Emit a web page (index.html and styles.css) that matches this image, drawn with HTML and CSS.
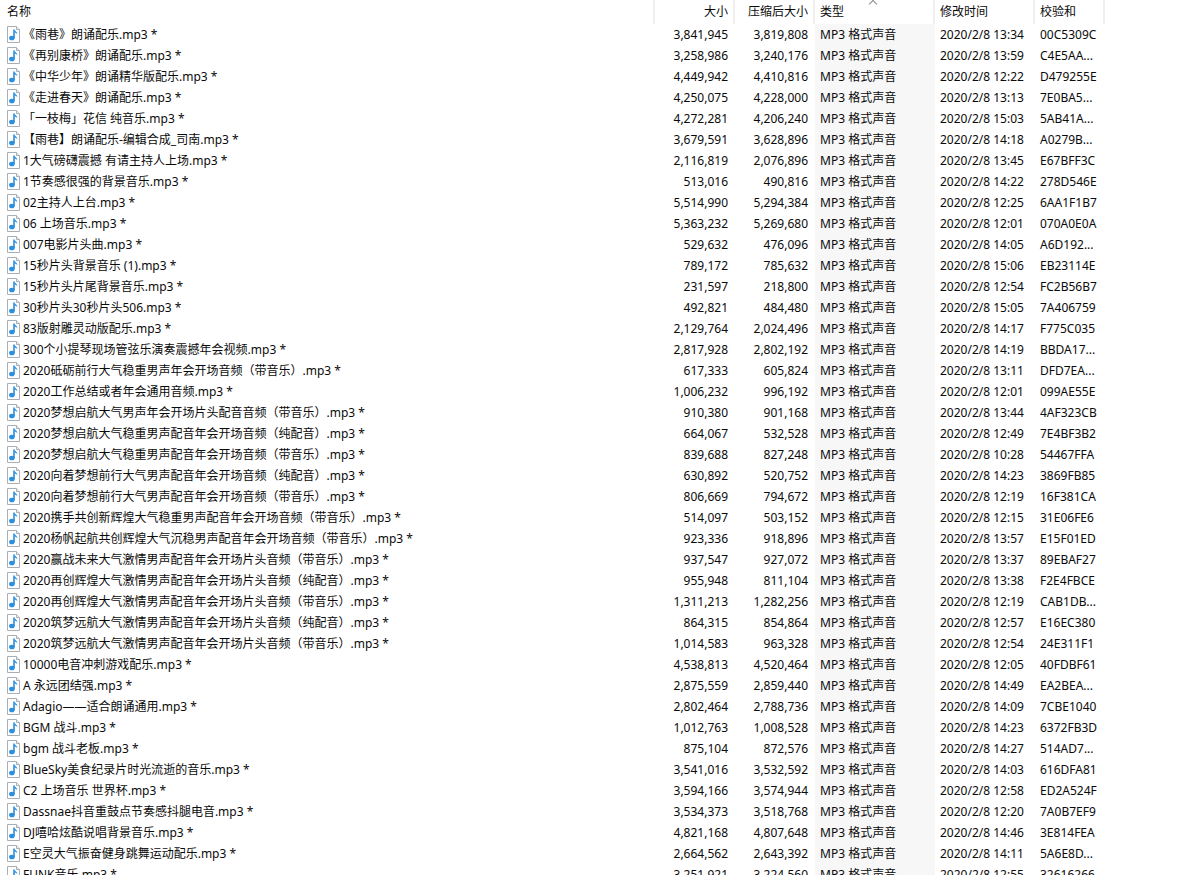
FILE: index.html
```html
<!DOCTYPE html>
<html lang="zh-CN">

<head>
  <meta charset="UTF-8">
  <title>压缩文件列表</title>
  <link rel="stylesheet" href="styles.css">
</head>

<body>
  <svg class="defs" width="0" height="0">
    <symbol id="mp3" viewBox="0 0 14 17">
      <path d="M.5 .5H9.5L12.5 3.5V16.5H.5Z" fill="#fff" stroke="#a8afb6"/>
      <path d="M9.5 .5V3.5H12.5" fill="#eef1f4" stroke="#a8afb6"/>
      <path d="M7 3.5V12" stroke="#2b8fdc" stroke-width="1.6"/>
      <path d="M7.5 3.5C8 5.5 10.8 5.5 10.2 8.5C9.6 7 8.8 6.8 7.5 6.5Z" fill="#2b8fdc"/>
      <ellipse cx="4.9" cy="12" rx="2.8" ry="2.3" fill="#2b8fdc"/>
    </symbol>
  </svg>

  <table class="files">
    <colgroup>
      <col class="c-name">
      <col class="c-size">
      <col class="c-packed">
      <col class="c-type">
      <col class="c-time">
      <col class="c-crc">
      <col>
    </colgroup>
    <thead>
      <tr>
        <th>名称</th>
        <th class="num">大小</th>
        <th class="num">压缩后大小</th>
        <th class="sorted">类型<span class="caret"></span></th>
        <th>修改时间</th>
        <th>校验和</th>
        <th class="rest"></th>
      </tr>
    </thead>
    <tbody>
      <tr><td><svg class="ico"><use href="#mp3"/></svg>《雨巷》朗诵配乐.mp3 *</td><td class="num">3,841,945</td><td class="num">3,819,808</td><td class="type">MP3 格式声音</td><td>2020/2/8 13:34</td><td>00C5309C</td><td></td></tr>
      <tr><td><svg class="ico"><use href="#mp3"/></svg>《再别康桥》朗诵配乐.mp3 *</td><td class="num">3,258,986</td><td class="num">3,240,176</td><td class="type">MP3 格式声音</td><td>2020/2/8 13:59</td><td>C4E5AA...</td><td></td></tr>
      <tr><td><svg class="ico"><use href="#mp3"/></svg>《中华少年》朗诵精华版配乐.mp3 *</td><td class="num">4,449,942</td><td class="num">4,410,816</td><td class="type">MP3 格式声音</td><td>2020/2/8 12:22</td><td>D479255E</td><td></td></tr>
      <tr><td><svg class="ico"><use href="#mp3"/></svg>《走进春天》朗诵配乐.mp3 *</td><td class="num">4,250,075</td><td class="num">4,228,000</td><td class="type">MP3 格式声音</td><td>2020/2/8 13:13</td><td>7E0BA5...</td><td></td></tr>
      <tr><td><svg class="ico"><use href="#mp3"/></svg>「一枝梅」花信 纯音乐.mp3 *</td><td class="num">4,272,281</td><td class="num">4,206,240</td><td class="type">MP3 格式声音</td><td>2020/2/8 15:03</td><td>5AB41A...</td><td></td></tr>
      <tr><td><svg class="ico"><use href="#mp3"/></svg>【雨巷】朗诵配乐-编辑合成_司南.mp3 *</td><td class="num">3,679,591</td><td class="num">3,628,896</td><td class="type">MP3 格式声音</td><td>2020/2/8 14:18</td><td>A0279B...</td><td></td></tr>
      <tr><td><svg class="ico"><use href="#mp3"/></svg>1大气磅礴震撼 有请主持人上场.mp3 *</td><td class="num">2,116,819</td><td class="num">2,076,896</td><td class="type">MP3 格式声音</td><td>2020/2/8 13:45</td><td>E67BFF3C</td><td></td></tr>
      <tr><td><svg class="ico"><use href="#mp3"/></svg>1节奏感很强的背景音乐.mp3 *</td><td class="num">513,016</td><td class="num">490,816</td><td class="type">MP3 格式声音</td><td>2020/2/8 14:22</td><td>278D546E</td><td></td></tr>
      <tr><td><svg class="ico"><use href="#mp3"/></svg>02主持人上台.mp3 *</td><td class="num">5,514,990</td><td class="num">5,294,384</td><td class="type">MP3 格式声音</td><td>2020/2/8 12:25</td><td>6AA1F1B7</td><td></td></tr>
      <tr><td><svg class="ico"><use href="#mp3"/></svg>06 上场音乐.mp3 *</td><td class="num">5,363,232</td><td class="num">5,269,680</td><td class="type">MP3 格式声音</td><td>2020/2/8 12:01</td><td>070A0E0A</td><td></td></tr>
      <tr><td><svg class="ico"><use href="#mp3"/></svg>007电影片头曲.mp3 *</td><td class="num">529,632</td><td class="num">476,096</td><td class="type">MP3 格式声音</td><td>2020/2/8 14:05</td><td>A6D192...</td><td></td></tr>
      <tr><td><svg class="ico"><use href="#mp3"/></svg>15秒片头背景音乐 (1).mp3 *</td><td class="num">789,172</td><td class="num">785,632</td><td class="type">MP3 格式声音</td><td>2020/2/8 15:06</td><td>EB23114E</td><td></td></tr>
      <tr><td><svg class="ico"><use href="#mp3"/></svg>15秒片头片尾背景音乐.mp3 *</td><td class="num">231,597</td><td class="num">218,800</td><td class="type">MP3 格式声音</td><td>2020/2/8 12:54</td><td>FC2B56B7</td><td></td></tr>
      <tr><td><svg class="ico"><use href="#mp3"/></svg>30秒片头30秒片头506.mp3 *</td><td class="num">492,821</td><td class="num">484,480</td><td class="type">MP3 格式声音</td><td>2020/2/8 15:05</td><td>7A406759</td><td></td></tr>
      <tr><td><svg class="ico"><use href="#mp3"/></svg>83版射雕灵动版配乐.mp3 *</td><td class="num">2,129,764</td><td class="num">2,024,496</td><td class="type">MP3 格式声音</td><td>2020/2/8 14:17</td><td>F775C035</td><td></td></tr>
      <tr><td><svg class="ico"><use href="#mp3"/></svg>300个小提琴现场管弦乐演奏震撼年会视频.mp3 *</td><td class="num">2,817,928</td><td class="num">2,802,192</td><td class="type">MP3 格式声音</td><td>2020/2/8 14:19</td><td>BBDA17...</td><td></td></tr>
      <tr><td><svg class="ico"><use href="#mp3"/></svg>2020砥砺前行大气稳重男声年会开场音频（带音乐）.mp3 *</td><td class="num">617,333</td><td class="num">605,824</td><td class="type">MP3 格式声音</td><td>2020/2/8 13:11</td><td>DFD7EA...</td><td></td></tr>
      <tr><td><svg class="ico"><use href="#mp3"/></svg>2020工作总结或者年会通用音频.mp3 *</td><td class="num">1,006,232</td><td class="num">996,192</td><td class="type">MP3 格式声音</td><td>2020/2/8 12:01</td><td>099AE55E</td><td></td></tr>
      <tr><td><svg class="ico"><use href="#mp3"/></svg>2020梦想启航大气男声年会开场片头配音音频（带音乐）.mp3 *</td><td class="num">910,380</td><td class="num">901,168</td><td class="type">MP3 格式声音</td><td>2020/2/8 13:44</td><td>4AF323CB</td><td></td></tr>
      <tr><td><svg class="ico"><use href="#mp3"/></svg>2020梦想启航大气稳重男声配音年会开场音频（纯配音）.mp3 *</td><td class="num">664,067</td><td class="num">532,528</td><td class="type">MP3 格式声音</td><td>2020/2/8 12:49</td><td>7E4BF3B2</td><td></td></tr>
      <tr><td><svg class="ico"><use href="#mp3"/></svg>2020梦想启航大气稳重男声配音年会开场音频（带音乐）.mp3 *</td><td class="num">839,688</td><td class="num">827,248</td><td class="type">MP3 格式声音</td><td>2020/2/8 10:28</td><td>54467FFA</td><td></td></tr>
      <tr><td><svg class="ico"><use href="#mp3"/></svg>2020向着梦想前行大气男声配音年会开场音频（纯配音）.mp3 *</td><td class="num">630,892</td><td class="num">520,752</td><td class="type">MP3 格式声音</td><td>2020/2/8 14:23</td><td>3869FB85</td><td></td></tr>
      <tr><td><svg class="ico"><use href="#mp3"/></svg>2020向着梦想前行大气男声配音年会开场音频（带音乐）.mp3 *</td><td class="num">806,669</td><td class="num">794,672</td><td class="type">MP3 格式声音</td><td>2020/2/8 12:19</td><td>16F381CA</td><td></td></tr>
      <tr><td><svg class="ico"><use href="#mp3"/></svg>2020携手共创新辉煌大气稳重男声配音年会开场音频（带音乐）.mp3 *</td><td class="num">514,097</td><td class="num">503,152</td><td class="type">MP3 格式声音</td><td>2020/2/8 12:15</td><td>31E06FE6</td><td></td></tr>
      <tr><td><svg class="ico"><use href="#mp3"/></svg>2020杨帆起航共创辉煌大气沉稳男声配音年会开场音频（带音乐）.mp3 *</td><td class="num">923,336</td><td class="num">918,896</td><td class="type">MP3 格式声音</td><td>2020/2/8 13:57</td><td>E15F01ED</td><td></td></tr>
      <tr><td><svg class="ico"><use href="#mp3"/></svg>2020赢战未来大气激情男声配音年会开场片头音频（带音乐）.mp3 *</td><td class="num">937,547</td><td class="num">927,072</td><td class="type">MP3 格式声音</td><td>2020/2/8 13:37</td><td>89EBAF27</td><td></td></tr>
      <tr><td><svg class="ico"><use href="#mp3"/></svg>2020再创辉煌大气激情男声配音年会开场片头音频（纯配音）.mp3 *</td><td class="num">955,948</td><td class="num">811,104</td><td class="type">MP3 格式声音</td><td>2020/2/8 13:38</td><td>F2E4FBCE</td><td></td></tr>
      <tr><td><svg class="ico"><use href="#mp3"/></svg>2020再创辉煌大气激情男声配音年会开场片头音频（带音乐）.mp3 *</td><td class="num">1,311,213</td><td class="num">1,282,256</td><td class="type">MP3 格式声音</td><td>2020/2/8 12:19</td><td>CAB1DB...</td><td></td></tr>
      <tr><td><svg class="ico"><use href="#mp3"/></svg>2020筑梦远航大气激情男声配音年会开场片头音频（纯配音）.mp3 *</td><td class="num">864,315</td><td class="num">854,864</td><td class="type">MP3 格式声音</td><td>2020/2/8 12:57</td><td>E16EC380</td><td></td></tr>
      <tr><td><svg class="ico"><use href="#mp3"/></svg>2020筑梦远航大气激情男声配音年会开场片头音频（带音乐）.mp3 *</td><td class="num">1,014,583</td><td class="num">963,328</td><td class="type">MP3 格式声音</td><td>2020/2/8 12:54</td><td>24E311F1</td><td></td></tr>
      <tr><td><svg class="ico"><use href="#mp3"/></svg>10000电音冲刺游戏配乐.mp3 *</td><td class="num">4,538,813</td><td class="num">4,520,464</td><td class="type">MP3 格式声音</td><td>2020/2/8 12:05</td><td>40FDBF61</td><td></td></tr>
      <tr><td><svg class="ico"><use href="#mp3"/></svg>A 永远团结强.mp3 *</td><td class="num">2,875,559</td><td class="num">2,859,440</td><td class="type">MP3 格式声音</td><td>2020/2/8 14:49</td><td>EA2BEA...</td><td></td></tr>
      <tr><td><svg class="ico"><use href="#mp3"/></svg>Adagio——适合朗诵通用.mp3 *</td><td class="num">2,802,464</td><td class="num">2,788,736</td><td class="type">MP3 格式声音</td><td>2020/2/8 14:09</td><td>7CBE1040</td><td></td></tr>
      <tr><td><svg class="ico"><use href="#mp3"/></svg>BGM 战斗.mp3 *</td><td class="num">1,012,763</td><td class="num">1,008,528</td><td class="type">MP3 格式声音</td><td>2020/2/8 14:23</td><td>6372FB3D</td><td></td></tr>
      <tr><td><svg class="ico"><use href="#mp3"/></svg>bgm 战斗老板.mp3 *</td><td class="num">875,104</td><td class="num">872,576</td><td class="type">MP3 格式声音</td><td>2020/2/8 14:27</td><td>514AD7...</td><td></td></tr>
      <tr><td><svg class="ico"><use href="#mp3"/></svg>BlueSky美食纪录片时光流逝的音乐.mp3 *</td><td class="num">3,541,016</td><td class="num">3,532,592</td><td class="type">MP3 格式声音</td><td>2020/2/8 14:03</td><td>616DFA81</td><td></td></tr>
      <tr><td><svg class="ico"><use href="#mp3"/></svg>C2 上场音乐 世界杯.mp3 *</td><td class="num">3,594,166</td><td class="num">3,574,944</td><td class="type">MP3 格式声音</td><td>2020/2/8 12:58</td><td>ED2A524F</td><td></td></tr>
      <tr><td><svg class="ico"><use href="#mp3"/></svg>Dassnae抖音重鼓点节奏感抖腿电音.mp3 *</td><td class="num">3,534,373</td><td class="num">3,518,768</td><td class="type">MP3 格式声音</td><td>2020/2/8 12:20</td><td>7A0B7EF9</td><td></td></tr>
      <tr><td><svg class="ico"><use href="#mp3"/></svg>DJ嘻哈炫酷说唱背景音乐.mp3 *</td><td class="num">4,821,168</td><td class="num">4,807,648</td><td class="type">MP3 格式声音</td><td>2020/2/8 14:46</td><td>3E814FEA</td><td></td></tr>
      <tr><td><svg class="ico"><use href="#mp3"/></svg>E空灵大气振奋健身跳舞运动配乐.mp3 *</td><td class="num">2,664,562</td><td class="num">2,643,392</td><td class="type">MP3 格式声音</td><td>2020/2/8 14:11</td><td>5A6E8D...</td><td></td></tr>
      <tr><td><svg class="ico"><use href="#mp3"/></svg>FUNK音乐.mp3 *</td><td class="num">3,251,921</td><td class="num">3,224,560</td><td class="type">MP3 格式声音</td><td>2020/2/8 12:55</td><td>32616266</td><td></td></tr>
    </tbody>
  </table>
</body>

</html>
```

FILE: styles.css
```css
html, body {
  margin: 0;
  height: 875px;
  overflow: hidden;
  background: #fff;
}
.defs {
  display: block;
  height: 0;
}
.files {
  width: 1187px;
  table-layout: fixed;
  border-collapse: separate;
  border-spacing: 0;
  font-family: "Noto Sans", "Noto Sans CJK SC", sans-serif;
  font-size: 12px;
  color: #0a0a0a;
}
.c-name { width: 655px; }
.c-size, .c-packed { width: 80px; }
.c-type { width: 120px; }
.c-time { width: 100px; }
.c-crc { width: 70px; }

th {
  height: 24px;
  padding: 0 6px 2px 5px;
  box-sizing: border-box;
  border-right: 2px solid #f0f0f0;
  font-weight: normal;
  text-align: left;
  white-space: nowrap;
  vertical-align: middle;
}
th:first-child { padding-left: 7px; }
th.num {
  padding-right: 5px;
  text-align: right;
}
th.sorted { position: relative; }
th.rest { border-right: 0; }
td {
  height: 21px;
  padding: 0 6px 0 5px;
  white-space: nowrap;
  overflow: hidden;
  line-height: 21px;
}
td:first-child { padding-left: 7px; }
td.num {
  padding-right: 7px;
  text-align: right;
}
.type { background: #f7f7f7; }
.ico {
  width: 14px;
  height: 17px;
  margin-right: 2px;
  vertical-align: -4px;
}
/* 排序箭头 */
.caret {
  position: absolute;
  top: 1px;
  left: 55px;
  width: 5px;
  height: 5px;
  border-left: 1px solid #8a8a8a;
  border-top: 1px solid #8a8a8a;
  transform: rotate(45deg);
}
```
